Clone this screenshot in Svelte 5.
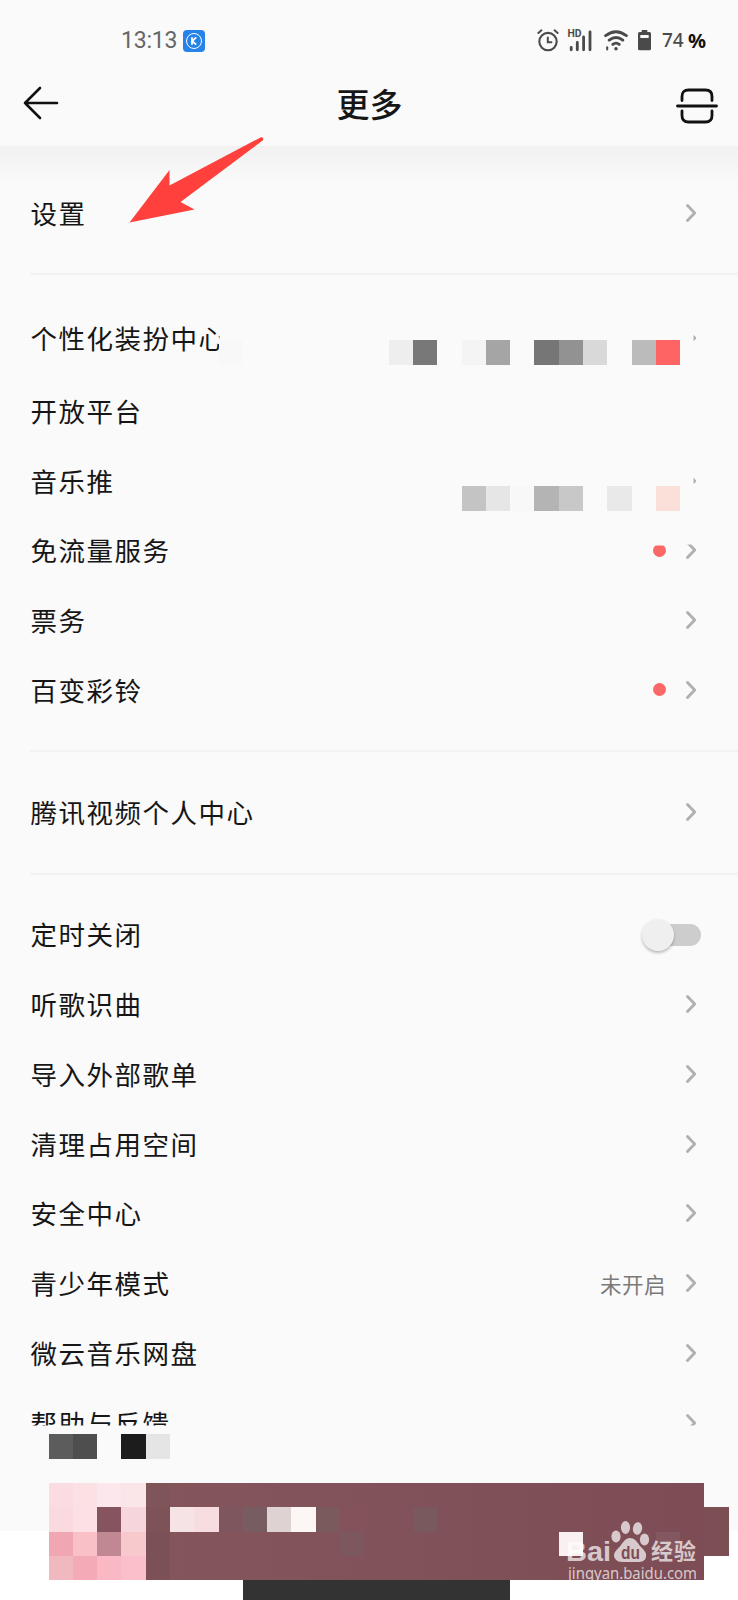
<script>
  const U = 24.29;

  const groups = [
    [{ label: '设置', arrow: 'full' }],
    [
      { label: '个性化装扮中心', arrow: 'tip', loose: true },
      { label: '开放平台' },
      { label: '音乐推', arrow: 'tip' },
      { label: '免流量服务', arrow: 'cut', dot: 'cut' },
      { label: '票务', arrow: 'full' },
      { label: '百变彩铃', arrow: 'full', dot: 'full' }
    ],
    [{ label: '腾讯视频个人中心', arrow: 'full' }],
    [
      { label: '定时关闭', toggle: true },
      { label: '听歌识曲', arrow: 'full' },
      { label: '导入外部歌单', arrow: 'full' },
      { label: '清理占用空间', arrow: 'full' },
      { label: '安全中心', arrow: 'full' },
      { label: '青少年模式', arrow: 'full', note: '未开启' },
      { label: '微云音乐网盘', arrow: 'full' },
      { label: '帮助与反馈', arrow: 'full' }
    ]
  ];

  // [column, row, colour, columns wide, rows high]
  const tiles = [
    [9, 14, '#f8f8f8'],
    [16, 14, '#eeeeee'], [17, 14, '#787878'], [19, 14, '#f4f4f4'], [20, 14, '#a5a5a5'],
    [22, 14, '#767676'], [23, 14, '#929292'], [24, 14, '#d9d9d9'], [26, 14, '#bbbbbb'], [27, 14, '#ff6464'],
    [19, 20, '#c4c4c4'], [20, 20, '#e6e6e6'], [21, 20, '#f8f8f8'], [22, 20, '#b4b4b4'],
    [23, 20, '#c8c8c8'], [25, 20, '#e9e9e9'], [27, 20, '#fae0d8']
  ];

  const footTiles = [
    [2, 59, '#5c5c5c'], [3, 59, '#4e4e4e'], [5, 59, '#1c1c1c'], [6, 59, '#e5e5e5'],
    [2, 61, '#fadce2'], [3, 61, '#fbe0e4'], [4, 61, '#fce8ec'], [5, 61, '#fae6e9'],
    [2, 62, '#fad9df'], [3, 62, '#fce0e5'], [4, 62, '#85545f'], [5, 62, '#f7d5dc'],
    [2, 63, '#f0a6b3'], [3, 63, '#f9c0c7'], [4, 63, '#bf8893'], [5, 63, '#f7c9cd'],
    [2, 64, '#f0b9c0'], [3, 64, '#f4abb7'], [4, 64, '#fab7c4'], [5, 64, '#fbbecb'],
    [6, 61, 'url(#maroon)', 23, 4],
    [29, 62, '#7c4f54', 1, 2],
    [6, 61, '#7f555a'], [6, 62, '#7d5358'], [6, 63, '#7b5157', 1, 2],
    [7, 62, '#f5e3e5'], [8, 62, '#f7dde0'], [9, 62, '#7d575d'],
    [10, 62, '#775d62'], [11, 62, '#dfd2d3'], [12, 62, '#fcf7f5'], [13, 62, '#7a5a5c'],
    [14, 62, '#83525a'], [14, 63, '#7d575e'], [17, 62, '#79595e'],
    [23, 63, '#fbf0f1'], [27, 63, '#83575f']
  ];
</script>

<div class="screen">
  <header>
    <div class="status">
      <div class="clock">
        <span>13:13</span>
        <svg width="22" height="22" viewBox="0 0 22 22">
          <rect width="22" height="22" rx="4" fill="#2583ea" />
          <circle cx="11" cy="11" r="7.5" fill="none" stroke="#fff" stroke-width="1" />
          <path d="M9 7.3v7.400M13.200 7.300l-4 3.800 4 3.600" fill="none" stroke="#fff" stroke-width="1.800" />
        </svg>
      </div>
      <div class="signals">
        <svg width="22" height="23" viewBox="0 0 22 23" fill="none" stroke="#4a4a4a" stroke-linecap="round">
          <circle cx="11" cy="12.6" r="8.7" stroke-width="2.1" />
          <path d="M10.8 8.5v4.8h3.6M1.4 4l3-2.7M17.6 1.3l3 2.7" stroke-width="2" />
        </svg>
        <svg class="bars" width="24" height="23" viewBox="0 0 24 23">
          <text x="-.5" y="7.8" textLength="14" lengthAdjust="spacingAndGlyphs">HD</text>
          <path d="M3.2 18.5v2.3M9.3 13.5v7.3M15.6 8v12.800M22 2.800v18" stroke="#4a4a4a" stroke-width="2.800" stroke-linecap="round" />
        </svg>
        <svg class="wifi" width="24" height="23" viewBox="0 0 24 23" fill="none" stroke="#4a4a4a" stroke-width="2.800" stroke-linecap="round">
          <path d="M1.600 6.700Q12 -1.200 22.400 6.700M5.200 11.200Q12 5.700 18.800 11.200M8.800 15.400Q12 12.800 15.200 15.400" />
          <circle cx="12" cy="19.800" r="1.800" fill="#4a4a4a" stroke="none" />
          <path d="M3.200 18.300v2.200" stroke-width="2" />
        </svg>
        <svg class="battery" width="13" height="21" viewBox="0 0 13 21">
          <path d="M3.700 0h5.600v2h2.200q1.500 0 1.500 1.500v15.300q0 1.500-1.500 1.500h-10q-1.500 0-1.500-1.500v-15.300q0-1.500 1.500-1.500h2.200z" fill="#4a4a4a" />
          <rect x="2.300" y="5" width="8.400" height="3" rx=".5" fill="#fafafa" />
        </svg>
        <span class="level">74</span><span class="percent">%</span>
      </div>
    </div>
    <nav>
      <svg class="back" width="36" height="34" viewBox="0 0 36 34" fill="none" stroke="#111" stroke-width="2.600" stroke-linecap="round" stroke-linejoin="round">
        <path d="M17 2 2 17l15 15M2 17h32" />
      </svg>
      <h1>更多</h1>
      <svg class="scan" width="42" height="36" viewBox="0 0 42 36" fill="none" stroke="#111" stroke-width="2.800" stroke-linecap="round">
        <path d="M1.500 18h39M6 12.500V8.500Q6 2 12.500 2h17Q36 2 36 8.500v4M6 23v4.500Q6 34 12.500 34h17q6.500 0 6.500-6.500V23" />
      </svg>
    </nav>
  </header>

  <main>
    {#each groups as rows}
      <section>
        {#each rows as row}
          <div class="row" class:loose={row.loose}>
            <span class="label">{row.label}</span>
            {#if row.note}<span class="note">{row.note}</span>{/if}
            {#if row.dot}<i class="dot" class:cut={row.dot === 'cut'}></i>{/if}
            {#if row.toggle}<span class="toggle"><i></i></span>{/if}
            {#if row.arrow}
              <svg class="arrow {row.arrow}" width="12" height="20" viewBox="0 0 12 20">
                <path d="M2.500 2.500L9.700 10l-7.200 7.500" fill="none" stroke="#b0b0b0" stroke-width="2.900" stroke-linecap="round" stroke-linejoin="round" />
              </svg>
            {/if}
          </div>
        {/each}
      </section>
    {/each}
  </main>

  <svg class="overlay" width="738" height="1600" viewBox="0 0 738 1600">
    <defs>
      <linearGradient id="maroon">
        <stop offset="0" stop-color="#85555c" />
        <stop offset=".45" stop-color="#81525a" />
        <stop offset="1" stop-color="#7d4c54" />
      </linearGradient>
    </defs>
    <rect y="1425.500" width="738" height="106" fill="#fafafa" />
    <rect y="1531" width="738" height="69" fill="#fff" />
    <rect x="219.500" y="320" width="26" height="38" fill="#fafafa" />
    <g shape-rendering="crispEdges">
      {#each [...tiles, ...footTiles] as [x, y, fill, w = 1, h = 1]}
        <rect x={x * U} y={y * 24.31} width={w * U} height={h * 24.31} {fill} />
      {/each}
      <rect x="243" y="1580" width="267" height="20" fill="#333" />
    </g>
    <g class="mark" fill="#fff" fill-opacity=".7">
      <text class="brand" x="566" y="1561" textLength="45" lengthAdjust="spacingAndGlyphs">Bai</text>
      <ellipse cx="616" cy="1536.500" rx="4.600" ry="6" />
      <ellipse cx="625.500" cy="1527.500" rx="4.600" ry="6.500" />
      <ellipse cx="637.500" cy="1528.500" rx="4.600" ry="6.300" transform="rotate(10 637.500 1528.500)" />
      <ellipse cx="644.500" cy="1539.500" rx="4.600" ry="6" />
      <path d="M630 1538c5 0 7 4 10 8 4 4 7 7 6 11-1 5-6 5-10 5h-12c-5 0-9-1-10-6 0-5 4-7 7-11 3-4 5-7 9-7z" />
      <text class="du" x="621" y="1559" textLength="19" lengthAdjust="spacingAndGlyphs">du</text>
      <text class="cn" x="651" y="1559" textLength="45">经验</text>
      <text class="url" x="568" y="1579" textLength="129" lengthAdjust="spacingAndGlyphs">jingyan.baidu.com</text>
    </g>
    <path d="M129.500 222.500L169.500 170v15.500L261 137.200q3-.5 2 3L180.500 202l14 7.500z" fill="#ff403c" />
  </svg>
</div>

<style>
  :global(body) { margin: 0; background: #fafafa; }
  .screen {
    position: relative;
    width: 738px;
    height: 1600px;
    overflow: hidden;
    background: #fafafa;
    color: #161616;
    font-family: "Noto Sans CJK SC", sans-serif;
  }
  svg { display: block; flex: none; }
  header { height: 146px; box-sizing: border-box; padding-top: 20px; }
  .status { display: flex; justify-content: space-between; align-items: center; height: 41px; padding: 0 34px 0 121px; }
  .clock { display: flex; align-items: center; gap: 7px; font: 23px/41px Roboto, sans-serif; color: #666; }
  .clock span { width: 55px; letter-spacing: -.2px; white-space: nowrap; }
  .signals { display: flex; align-items: center; }
  .bars { margin-left: 9px; overflow: visible; }
  .bars text { font: bold 10px Roboto, sans-serif; fill: #4a4a4a; }
  .wifi { margin-left: 12px; }
  .battery { margin-left: 10px; }
  .level { width: 21px; margin-left: 11px; font: 500 19px/41px "Noto Sans", sans-serif; color: #4a4a4a; }
  .percent { width: 16px; margin-left: 5px; font: bold 20px/41px "Noto Sans", sans-serif; font-stretch: condensed; color: #111; }
  nav { display: flex; justify-content: space-between; align-items: center; height: 84px; padding: 0 20px 0 23px; box-sizing: border-box; }
  .scan { margin-top: 5px; }
  h1 { margin: 0 0 0 4px; font-size: 33px; line-height: 48px; font-weight: 500; }
  main { background: linear-gradient(#f1f1f1, #fafafa 40px); }
  section { padding: 27px 0 25.500px; }
  section:first-child { padding-top: 32px; }
  section:nth-child(2) { padding-top: 30px; }
  section + section { background: linear-gradient(#f2f2f2, #f2f2f2) 30px 0 / 708px 2px no-repeat; }
  .row { display: flex; align-items: center; height: 69.750px; padding: 0 41px 0 30.500px; }
  .row.loose { padding-bottom: 3px; }
  .label { flex: 1; font-size: 26.500px; line-height: 40px; letter-spacing: 1.500px; white-space: nowrap; }
  .note { margin-right: 19px; font-size: 21.500px; color: #7a7a7a; letter-spacing: .5px; }
  .dot { width: 13px; height: 13px; margin-right: 19px; border-radius: 50%; background: #fb6868; }
  .dot.cut { clip-path: inset(1.500px 0 0 0); }
  .arrow.cut { clip-path: inset(4px 0 0 0); }
  .arrow.tip { clip-path: inset(7px 0 7px 8.500px); }
  .toggle { display: flex; align-items: center; width: 48px; height: 22px; margin: 2px -4px 0 0; border-radius: 0 11px 11px 0; background: #cdcdcd; }
  .toggle i { width: 32px; height: 32px; margin-left: -11px; flex: none; border-radius: 50%; background: #efefef; box-shadow: 0 2px 3px rgba(0, 0, 0, .25); }
  .overlay { position: absolute; top: 0; left: 0; }
  .mark { font-family: "Noto Sans", sans-serif; }
  .brand { font: bold 28px "Liberation Sans", sans-serif; }
  .du { font: bold 18px "Liberation Sans", sans-serif; fill: #7d4c54; fill-opacity: 1; }
  .cn { font: bold 22px "Noto Sans CJK SC", sans-serif; }
  .url { font: 15.500px "Noto Sans", sans-serif; }
</style>
